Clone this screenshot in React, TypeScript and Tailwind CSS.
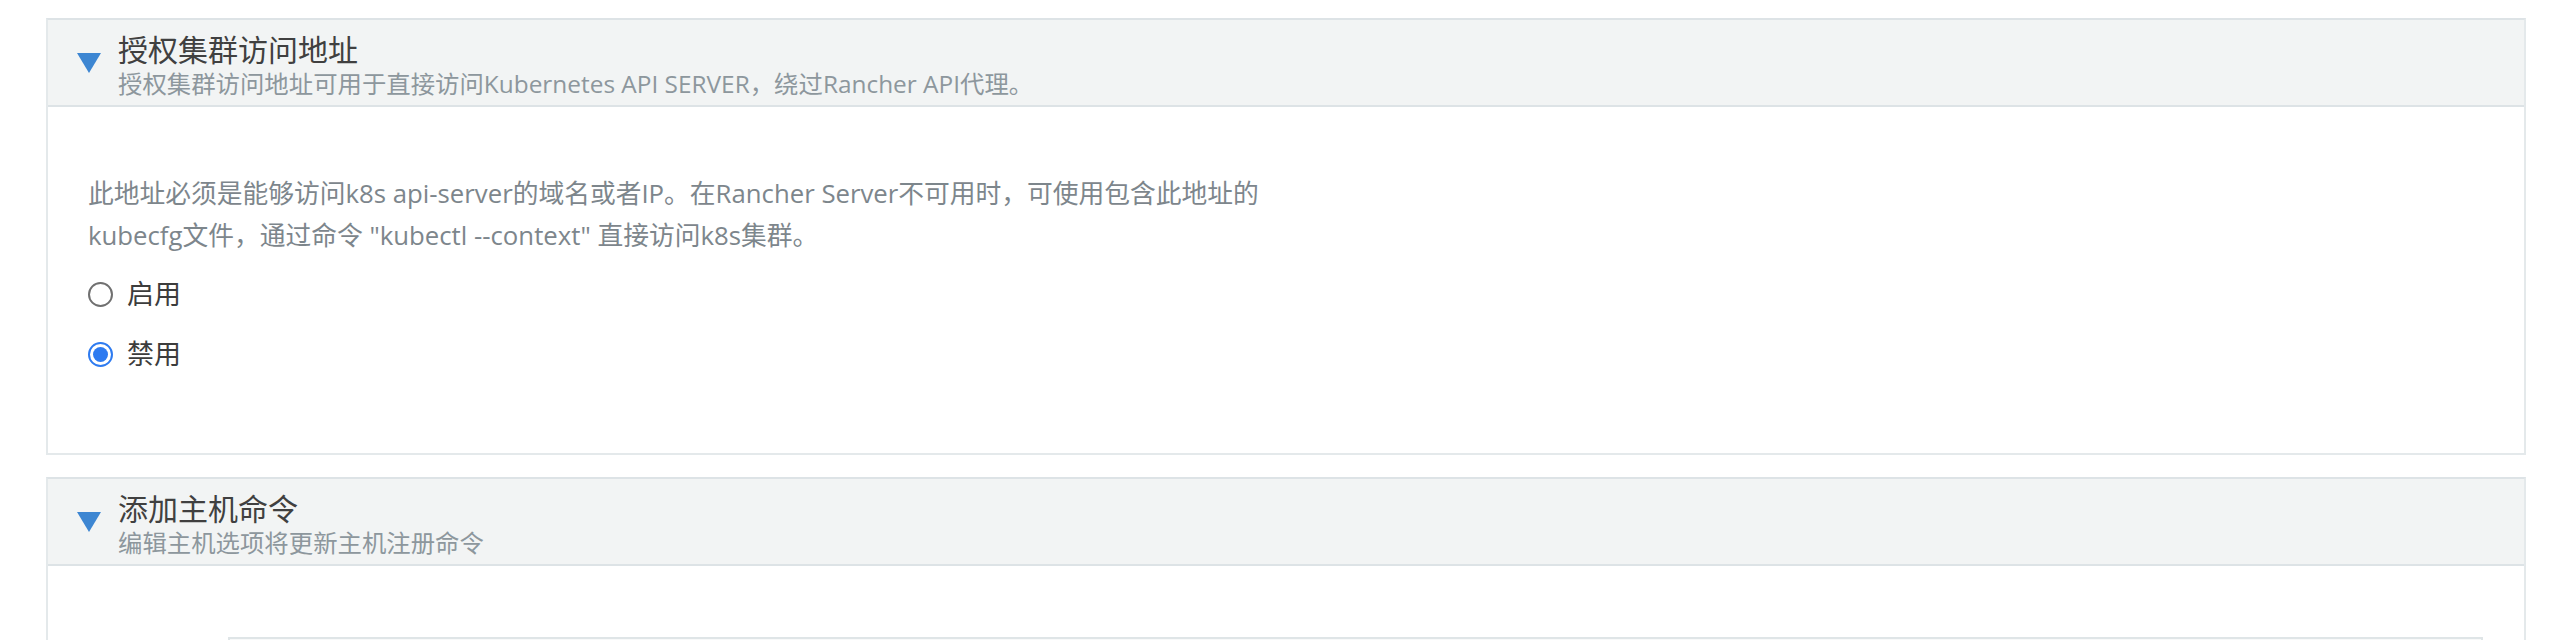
import React from "react";

function Triangle() {
  return (
    <svg width="24" height="20" viewBox="0 0 24 20" className="shrink-0">
      <polygon points="0,0 24,0 12,20" fill="#3d86d2" />
    </svg>
  );
}

function Header({ title, sub }: { title: string; sub: string }) {
  return (
    <div className="flex h-[87px] items-start border-b-2 border-[#dde3e6] bg-[#f2f4f4] pl-[29px]">
      <div className="mt-[33px]">
        <Triangle />
      </div>
      <div className="ml-[17px] pt-[13px]">
        <div className="text-[30px] leading-[34px] text-[#404040]">{title}</div>
        <div className="text-[24.4px] leading-[34px] text-[#8d979d]">{sub}</div>
      </div>
    </div>
  );
}

function Radio({ checked, label }: { checked: boolean; label: string }) {
  return (
    <div className="flex h-[40px] items-center">
      {checked ? (
        <span className="flex h-[25px] w-[25px] items-center justify-center rounded-full border-2 border-[#2e7bf0] bg-white">
          <span className="h-[15px] w-[15px] rounded-full bg-[#2e7bf0]" />
        </span>
      ) : (
        <span className="h-[25px] w-[25px] rounded-full border-2 border-[#707070] bg-white" />
      )}
      <span className="ml-[14px] text-[27px] leading-[40px] text-[#3c3c3c]">{label}</span>
    </div>
  );
}

export default function App() {
  return (
    <div className="min-h-[640px] bg-white pl-[46px] pr-[28px] pt-[18px] font-['Open_Sans','Noto_Sans_CJK_SC',sans-serif]">
      <div className="border-2 border-[#e4e9eb] border-t-[#dde3e6]">
        <Header
          title="授权集群访问地址"
          sub="授权集群访问地址可用于直接访问Kubernetes API SERVER，绕过Rancher API代理。"
        />
        <div className="pb-[79px] pl-[40px] pt-[65px]">
          <p className="text-[25.75px] leading-[42px] text-[#7d868c]">
            此地址必须是能够访问k8s api-server的域名或者IP。在Rancher Server不可用时，可使用包含此地址的
            <br />
            kubecfg文件，通过命令 "kubectl --context" 直接访问k8s集群。
          </p>
          <div className="mt-[18px] flex flex-col gap-[20px]">
            <Radio checked={false} label="启用" />
            <Radio checked={true} label="禁用" />
          </div>
        </div>
      </div>

      <div className="mt-[22px] border-2 border-b-0 border-[#e4e9eb] border-t-[#dde3e6]">
        <Header title="添加主机命令" sub="编辑主机选项将更新主机注册命令" />
        <div className="pl-[180px] pr-[41px] pt-[71px]">
          <div className="h-[120px] border-2 border-[#dfe5e7] bg-[#f8f9f9]" />
        </div>
      </div>
    </div>
  );
}
